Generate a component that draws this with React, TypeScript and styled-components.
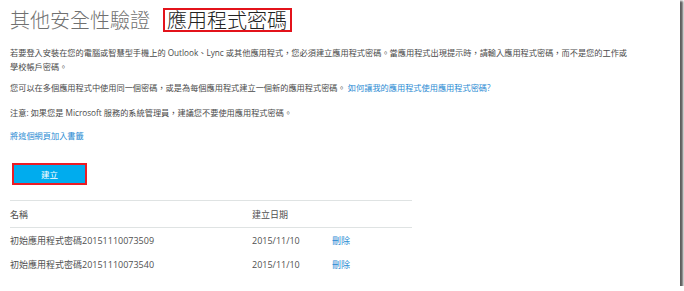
import React from 'react';
import styled, { createGlobalStyle } from 'styled-components';

const GlobalStyle = createGlobalStyle`
	body {
		margin: 0;
		background: #ffffff;
	}
`;

const passwords = [
	{ name: '初始應用程式密碼20151110073509', date: '2015/11/10' },
	{ name: '初始應用程式密碼20151110073540', date: '2015/11/10' },
];

const App = (): React.FunctionComponentElement<JSX.Element> => {
	return (
		<>
			<GlobalStyle />
			<Frame>
				<TitleRow>
					<Title>其他安全性驗證</Title>
					<Highlight>應用程式密碼</Highlight>
				</TitleRow>
				<Paragraph $top={14}>
					若要登入安裝在您的電腦或智慧型手機上的 Outlook、Lync 或其他應用程式，您必須建立應用程式密碼。當應用程式出現提示時，請輸入應用程式密碼，而不是您的工作或
					<br />
					學校帳戶密碼。
				</Paragraph>
				<Paragraph $top={7}>
					您可以在多個應用程式中使用同一個密碼，或是為每個應用程式建立一個新的應用程式密碼。 <Link>如何讓我的應用程式使用應用程式密碼?</Link>
				</Paragraph>
				<Paragraph $top={11}>注意: 如果您是 Microsoft 服務的系統管理員，建議您不要使用應用程式密碼。</Paragraph>
				<Paragraph $top={9}>
					<Link>將這個網頁加入書籤</Link>
				</Paragraph>
				<CreateButton>建立</CreateButton>
				<Table>
					<Row $header>
						<Cell>名稱</Cell>
						<Cell>建立日期</Cell>
						<Cell></Cell>
					</Row>
					{passwords.map((item) => (
						<Row key={item.name}>
							<Cell>{item.name}</Cell>
							<Cell>{item.date}</Cell>
							<Cell>
								<Link>刪除</Link>
							</Cell>
						</Row>
					))}
				</Table>
			</Frame>
		</>
	);
};

const Frame = styled.div`
	width: 680px;
	height: 286px;
	box-sizing: border-box;
	padding: 8px 10px 0;
	background: #ffffff;
	box-shadow: 2px 2px 2px 1px rgba(40, 40, 40, 0.75);
	font-family: 'Open Sans', 'Noto Sans CJK TC', sans-serif;
	overflow: hidden;
`;

const TitleRow = styled.div`
	display: flex;
	align-items: center;
	gap: 13px;
	height: 24px;
`;

const Title = styled.h1`
	margin: 0;
	font-size: 20px;
	line-height: 20px;
	font-weight: 300;
	color: #707070;
	font-family: 'Noto Sans CJK TC', sans-serif;
`;

const Highlight = styled(Title)`
	color: #222222;
	border: 2px solid #e3131b;
	padding: 0 3px 0 2px;
`;

const Paragraph = styled.p<{ $top: number }>`
	margin: ${(p) => p.$top}px 0 0;
	font-size: 8.2px;
	line-height: 14px;
	color: #4a4a4a;
	white-space: nowrap;
`;

const Link = styled.a`
	color: #2a8bd3;
	cursor: pointer;
`;

const CreateButton = styled.button`
	display: block;
	margin: 20px 0 0 2px;
	width: 75px;
	height: 22px;
	border: 2px solid #ec1c24;
	background: #00acee;
	color: #ffffff;
	font-family: 'Noto Sans CJK TC', sans-serif;
	font-size: 8.5px;
	padding: 0;
`;

const Table = styled.div`
	width: 402px;
	margin-top: 15px;
	border-top: 1px solid #dfe3e3;
`;

const Row = styled.div<{ $header?: boolean }>`
	display: grid;
	grid-template-columns: 242px 80px 1fr;
	height: ${(p) => (p.$header ? 26 : 24)}px;
	align-items: center;
	border-bottom: ${(p) => (p.$header ? '1px solid #dfe3e3' : 'none')};
	font-size: 9px;
	color: #505050;
`;

const Cell = styled.div`
	white-space: nowrap;
`;

export default App;
